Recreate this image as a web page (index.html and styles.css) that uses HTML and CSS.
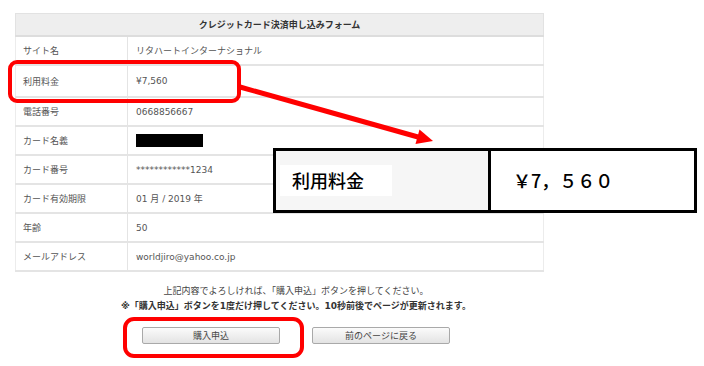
FILE: index.html
```html
<!DOCTYPE html>
<html lang="ja">
<head>
    <meta charset="UTF-8">
    <title>クレジットカード決済申し込みフォーム</title>
    <link rel="stylesheet" href="styles.css">
</head>
<body>
    <div class="page">
        <table class="form-table">
            <tr><th colspan="2">クレジットカード決済申し込みフォーム</th></tr>
            <tr><td class="label">サイト名</td><td>リタハートインターナショナル</td></tr>
            <tr class="tall"><td class="label">利用料金</td><td>¥7,560</td></tr>
            <tr><td class="label">電話番号</td><td>0668856667</td></tr>
            <tr><td class="label">カード名義</td><td><span class="redact"></span></td></tr>
            <tr><td class="label">カード番号</td><td>************1234</td></tr>
            <tr><td class="label">カード有効期限</td><td>01 月 / 2019 年</td></tr>
            <tr><td class="label">年齢</td><td>50</td></tr>
            <tr><td class="label">メールアドレス</td><td>worldjiro@yahoo.co.jp</td></tr>
        </table>

        <div class="footer">
            <p class="note">上記内容でよろしければ、「購入申込」ボタンを押してください。</p>
            <p class="note strong">※「購入申込」ボタンを1度だけ押してください。10秒前後でページが更新されます。</p>
            <div class="buttons">
                <button class="btn">購入申込</button>
                <button class="btn">前のページに戻る</button>
            </div>
        </div>

        <!-- annotations drawn over the screenshot -->
        <div class="mark mark-price"></div>
        <div class="mark mark-button"></div>
        <svg class="arrow" width="704" height="366" viewBox="0 0 704 366">
            <line x1="240" y1="87" x2="418" y2="137" stroke="#ff0000" stroke-width="5"/>
            <polygon points="433,141 415.5,144 419.5,129.5" fill="#ff0000"/>
        </svg>
        <div class="zoom-box">
            <div class="zoom-label"><span>利用料金</span></div>
            <div class="zoom-value">￥7，５６０</div>
        </div>
    </div>
</body>
</html>
```

FILE: styles.css
```css
body { margin: 0; background: #fff; font-family: "DejaVu Sans", "Noto Sans CJK JP", sans-serif; color: #555; }
.page { position: relative; width: 704px; height: 366px; overflow: hidden; }

.form-table { margin: 13px 0 0 15px; width: 529px; border-collapse: collapse; font-size: 9px; }
.form-table th { height: 21px; background: #eeeeee; color: #333; font-weight: bold; text-align: center; border: 1px solid #e2e2e2; border-bottom: 2px solid #dddddd; padding: 0; }
.form-table td { height: 27px; padding: 0 0 0 8px; border-bottom: 2px solid #e4e4e4; }
.form-table td.label { width: 104px; padding-left: 7px; border-left: 1px solid #ececec; border-right: 1px solid #e4e4e4; }
.form-table td:last-child { border-right: 1px solid #ececec; }
.form-table tr.tall td { height: 30px; }
.redact { display: inline-block; width: 67px; height: 13px; background: #000; vertical-align: middle; }

.footer { width: 562px; margin-left: 15px; text-align: center; padding-top: 12px; }
.note { margin: 0; font-size: 9px; line-height: 15px; color: #444; }
.note.strong { font-weight: bold; color: #333; }
.buttons { display: flex; justify-content: center; gap: 32px; margin-top: 13px; }
.btn { width: 138px; height: 17px; padding: 0; font-family: inherit; font-size: 9px; color: #444; border: 1px solid #a9a9a9; border-radius: 2px; background: linear-gradient(#fbfbfb, #e3e3e3); }

.mark { position: absolute; border: 4px solid #ff0000; box-sizing: border-box; }
.mark-price { left: 8px; top: 60px; width: 233px; height: 43px; border-radius: 9px; }
.mark-button { left: 123px; top: 317px; width: 181px; height: 41px; border-radius: 11px; }
.arrow { position: absolute; left: 0; top: 0; }

.zoom-box { position: absolute; left: 273px; top: 148px; width: 424px; height: 65px; box-sizing: border-box; border: 3px solid #000; display: flex; background: #fff; color: #000; font-family: "Noto Sans CJK JP", sans-serif; font-size: 18px; font-weight: 500; }
.zoom-label { width: 208px; border-right: 3px solid #000; background: #f6f6f6; display: flex; align-items: center; padding-left: 4px; }
.zoom-label span { background: #fff; padding: 3px 28px 4px 12px; line-height: 24px; }
.zoom-value { flex: 1; display: flex; align-items: center; padding-left: 22px; padding-bottom: 2px; }
```
